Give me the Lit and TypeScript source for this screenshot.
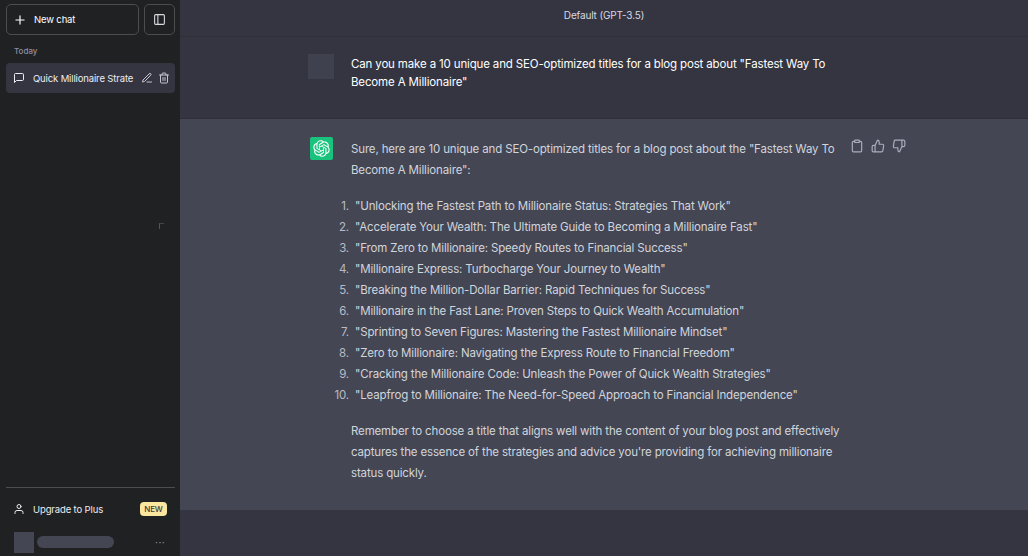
import { LitElement, html, css, svg } from "lit";
import { customElement } from "lit/decorators.js";

const LOGO = "M37.5324 16.8707C37.9808 15.5241 38.1363 14.0974 37.9886 12.6859C37.8409 11.2744 37.3934 9.91076 36.676 8.68622C35.6126 6.83404 33.9882 5.3676 32.0373 4.4985C30.0864 3.62941 27.9098 3.40259 25.8215 3.85078C24.8796 2.7893 23.7219 1.94125 22.4257 1.36341C21.1295 0.785575 19.7249 0.491269 18.3058 0.500197C16.1708 0.495044 14.0893 1.16803 12.3614 2.42214C10.6335 3.67624 9.34853 5.44666 8.6917 7.47815C7.30085 7.76286 5.98686 8.3414 4.8377 9.17505C3.68854 10.0087 2.73073 11.0782 2.02839 12.312C0.956464 14.1591 0.498905 16.2988 0.721698 18.4228C0.944492 20.5467 1.83612 22.5449 3.268 24.1293C2.81966 25.4759 2.66413 26.9026 2.81182 28.3141C2.95951 29.7256 3.40701 31.0892 4.12437 32.3138C5.18791 34.1659 6.8123 35.6322 8.76321 36.5013C10.7141 37.3704 12.8907 37.5973 14.9789 37.1492C15.9208 38.2107 17.0786 39.0587 18.3747 39.6366C19.6709 40.2144 21.0755 40.5087 22.4946 40.4998C24.6307 40.5054 26.7133 39.8321 28.4418 38.5772C30.1704 37.3223 31.4556 35.5506 32.1119 33.5179C33.5027 33.2332 34.8167 32.6547 35.9659 31.821C37.115 30.9874 38.0728 29.9178 38.7752 28.684C39.8458 26.8371 40.3023 24.6979 40.0789 22.5748C39.8556 20.4517 38.9639 18.4544 37.5324 16.8707ZM22.4978 37.8849C20.7443 37.8874 19.0459 37.2733 17.6994 36.1501C17.7601 36.117 17.8666 36.0586 17.936 36.0161L25.9004 31.4156C26.1003 31.3019 26.2663 31.137 26.3813 30.9378C26.4964 30.7386 26.5563 30.5124 26.5549 30.2825V19.0542L29.9213 20.998C29.9389 21.0068 29.9541 21.0198 29.9656 21.0359C29.977 21.052 29.9842 21.0707 29.9867 21.0902V30.3889C29.9842 32.375 29.1946 34.2791 27.7909 35.6841C26.3872 37.0892 24.4838 37.8806 22.4978 37.8849ZM6.39227 31.0064C5.51397 29.4888 5.19742 27.7107 5.49804 25.9832C5.55718 26.0187 5.66048 26.0818 5.73461 26.1244L13.699 30.7248C13.8975 30.8408 14.1233 30.902 14.3532 30.902C14.583 30.902 14.8088 30.8408 15.0073 30.7248L24.731 25.1103V28.9979C24.7321 29.0177 24.7283 29.0376 24.7199 29.0556C24.7115 29.0736 24.6988 29.0893 24.6829 29.1012L16.6317 33.7497C14.9096 34.7416 12.8643 35.0097 10.9447 34.4954C9.02506 33.9811 7.38785 32.7263 6.39227 31.0064ZM4.29707 13.6194C5.17156 12.0998 6.55279 10.9364 8.19885 10.3327C8.19885 10.4013 8.19491 10.5228 8.19491 10.6071V19.808C8.19351 20.0378 8.25334 20.2638 8.36823 20.4629C8.48312 20.6619 8.64893 20.8267 8.84863 20.9404L18.5723 26.5542L15.206 28.4979C15.1894 28.5089 15.1703 28.5155 15.1505 28.5173C15.1307 28.5191 15.1107 28.516 15.0924 28.5082L7.04046 23.8557C5.32135 22.8601 4.06716 21.2235 3.55289 19.3046C3.03862 17.3858 3.30624 15.3413 4.29707 13.6194ZM31.955 20.0556L22.2312 14.4411L25.5976 12.4981C25.6142 12.4872 25.6333 12.4805 25.6531 12.4787C25.6729 12.4769 25.6928 12.4801 25.7111 12.4879L33.7631 17.1364C34.9967 17.849 36.0017 18.8982 36.6606 20.1613C37.3194 21.4244 37.6047 22.849 37.4832 24.2684C37.3617 25.6878 36.8382 27.0432 35.9743 28.1759C35.1103 29.3086 33.9415 30.1717 32.6047 30.6641C32.6047 30.5947 32.6047 30.4733 32.6047 30.3889V21.188C32.6066 20.9586 32.5474 20.7328 32.4332 20.5338C32.319 20.3348 32.154 20.1698 31.955 20.0556ZM35.3055 15.0128C35.2464 14.9765 35.1431 14.9142 35.069 14.8717L27.1045 10.2712C26.906 10.1554 26.6803 10.0943 26.4504 10.0943C26.2206 10.0943 25.9948 10.1554 25.7963 10.2712L16.0726 15.8858V11.9982C16.0715 11.9783 16.0753 11.9585 16.0837 11.9405C16.0921 11.9225 16.1048 11.9068 16.1207 11.8949L24.1719 7.25025C25.4053 6.53903 26.8158 6.19376 28.2383 6.25482C29.6608 6.31589 31.0364 6.78077 32.2044 7.59508C33.3723 8.40939 34.2842 9.53945 34.8334 10.8531C35.3826 12.1667 35.5464 13.6095 35.3055 15.0128ZM14.2424 21.9419L10.8752 19.9981C10.8576 19.9893 10.8423 19.9763 10.8309 19.9602C10.8195 19.9441 10.8122 19.9254 10.8098 19.9058V10.6071C10.8107 9.18295 11.2173 7.78848 11.9819 6.58696C12.7466 5.38544 13.8377 4.42659 15.1275 3.82264C16.4173 3.21869 17.8524 2.99464 19.2649 3.1767C20.6775 3.35876 22.0089 3.93941 23.1034 4.85067C23.0427 4.88379 22.937 4.94215 22.8668 4.98473L14.9024 9.58517C14.7025 9.69878 14.5366 9.86356 14.4215 10.0626C14.3065 10.2616 14.2466 10.4877 14.2479 10.7175L14.2424 21.9419ZM16.071 17.9991L20.4018 15.4978L24.7325 17.9975V22.9985L20.4018 25.4983L16.071 22.9985V17.9991Z";

const ic = (body: unknown, size = 14) => html`<svg class="ic" width=${size} height=${size} viewBox="0 0 24 24" fill="none" stroke="currentColor" stroke-width="2" stroke-linecap="round" stroke-linejoin="round">${body}</svg>`;

const TITLES = [
  "Unlocking the Fastest Path to Millionaire Status: Strategies That Work",
  "Accelerate Your Wealth: The Ultimate Guide to Becoming a Millionaire Fast",
  "From Zero to Millionaire: Speedy Routes to Financial Success",
  "Millionaire Express: Turbocharge Your Journey to Wealth",
  "Breaking the Million-Dollar Barrier: Rapid Techniques for Success",
  "Millionaire in the Fast Lane: Proven Steps to Quick Wealth Accumulation",
  "Sprinting to Seven Figures: Mastering the Fastest Millionaire Mindset",
  "Zero to Millionaire: Navigating the Express Route to Financial Freedom",
  "Cracking the Millionaire Code: Unleash the Power of Quick Wealth Strategies",
  "Leapfrog to Millionaire: The Need-for-Speed Approach to Financial Independence",
];

@customElement("app-root")
export class AppRoot extends LitElement {
  static styles = css`
    :host { display: block; width: 1028px; height: 556px; overflow: hidden; font-family: Inter, "Liberation Sans", sans-serif; }
    * { box-sizing: border-box; }
    .app { display: flex; height: 556px; }
    .side { position: relative; width: 180px; flex: none; background: #202123; display: flex; flex-direction: column; padding: 4px 5px 2px 6px; color: #ececf1; }
    .top { display: flex; gap: 5px; height: 31px; }
    .btn { border: 1px solid #4d4d4f; border-radius: 5px; display: flex; align-items: center; color: #fff; }
    .new { width: 133px; padding-left: 6px; font-size: 9.5px; gap: 7px; letter-spacing: -0.15px; }
    .toggle { width: 31px; justify-content: center; color: #d9d9e3; }
    .today { font-size: 8px; font-weight: 500; color: #8e8ea0; margin: 9px 0 0 8px; height: 15px; line-height: 15px; }
    .item { margin-top: 4px; height: 30px; border-radius: 4px; background: #343541; display: flex; align-items: center; padding-left: 7px; font-size: 9.5px; letter-spacing: -0.14px; }
    .item .name { margin-left: 8px; width: 102px; white-space: nowrap; overflow: hidden; }
    .item .acts { display: flex; gap: 5px; color: #c5c5d2; margin-left: 6px; }
    .spacer { flex: 1; }
    .rule { border-top: 1px solid #4d4d4f; height: 0; }
    .upgrade { height: 42px; display: flex; align-items: center; padding-left: 7px; font-size: 9.5px; letter-spacing: -0.13px; }
    .upgrade span.t { margin-left: 8px; flex: 1; }
    .badge { width: 27px; height: 14px; margin-right: 8px; border-radius: 4px; background: #fae69e; color: #3a3a3f; font-size: 8px; font-weight: 500; display: flex; align-items: center; justify-content: center; }
    .user { height: 24px; display: flex; align-items: center; padding-left: 8px; }
    .avatar { width: 20px; height: 21px; background: #444654; }
    .pill { width: 77px; height: 12px; margin-left: 3px; border-radius: 6px; background: #444654; }
    .dots { margin-left: 41px; color: #8e8ea0; font-size: 10px; letter-spacing: 0.5px; line-height: 1; }
    .speck { position: absolute; left: 159px; top: 223px; width: 5px; height: 6px; border-left: 1px solid #555; border-top: 1px solid #444; }
    .main { flex: 1; background: #343541; color: #ececf1; display: flex; flex-direction: column; }
    .head { height: 37px; border-bottom: 1px solid #2f303a; display: flex; align-items: center; justify-content: center; font-size: 10px; letter-spacing: -0.15px; color: #d9d9e3; padding-bottom: 7px; }
    .row { display: flex; padding-left: 128px; }
    .u { height: 82px; padding-top: 17px; border-bottom: 1px solid #2d2e38; font-size: 11.5px; letter-spacing: -0.15px; line-height: 18px; color: #fff; }
    .ua { width: 26px; height: 25px; background: #40414f; flex: none; }
    .msg { margin-left: 17px; width: 490px; margin-top: 1px; }
    .a { height: 391px; background: #444654; padding-top: 18px; font-size: 11.5px; letter-spacing: -0.15px; line-height: 21px; color: #d1d5db; position: relative; }
    .logo { width: 23px; height: 23px; border-radius: 2px; background: #19c37d; flex: none; margin-right: 18px; margin-left: 2px; display: flex; align-items: center; justify-content: center; }
    .a .msg { margin-left: 0; margin-top: 2px; }
    p { margin: 0; }
    ol { margin: 15px 0; padding: 0 0 0 4px; list-style: none; }
    li { display: flex; }
    li .n { width: 0; display: flex; justify-content: flex-end; color: #b8bcc6; white-space: nowrap; }
    li .n span { padding-right: 6px; }
    .tools { display: flex; gap: 7px; color: #acacbe; margin-left: 9px; margin-top: 2px; height: 16px; align-items: flex-start; }
  `;

  render() {
    return html`<div class="app">
      <aside class="side">
        <div class="top">
          <div class="btn new">${ic(svg`<line x1="12" y1="5" x2="12" y2="19"/><line x1="5" y1="12" x2="19" y2="12"/>`)}<span>New chat</span></div>
          <div class="btn toggle">${ic(svg`<rect x="3" y="3" width="18" height="18" rx="2"/><line x1="9" y1="3" x2="9" y2="21"/>`, 13)}</div>
        </div>
        <div class="today">Today</div>
        <div class="item">
          ${ic(svg`<path d="M21 15a2 2 0 0 1-2 2H7l-4 4V5a2 2 0 0 1 2-2h14a2 2 0 0 1 2 2z"/>`, 12)}
          <span class="name">Quick Millionaire Strate</span>
          <span class="acts">
            ${ic(svg`<path d="M12 20h9"/><path d="M16.5 3.5a2.12 2.12 0 0 1 3 3L7 19l-4 1 1-4L16.5 3.5z"/>`, 12)}
            ${ic(svg`<polyline points="3 6 5 6 21 6"/><path d="M19 6v14a2 2 0 0 1-2 2H7a2 2 0 0 1-2-2V6m3 0V4a2 2 0 0 1 2-2h4a2 2 0 0 1 2 2v2"/><line x1="10" y1="11" x2="10" y2="17"/><line x1="14" y1="11" x2="14" y2="17"/>`, 12)}
          </span>
        </div>
        <div class="spacer"></div>
        <div class="rule"></div>
        <div class="upgrade">
          ${ic(svg`<path d="M20 21v-2a4 4 0 0 0-4-4H8a4 4 0 0 0-4 4v2"/><circle cx="12" cy="7" r="4"/>`, 12)}
          <span class="t">Upgrade to Plus</span><span class="badge">NEW</span>
        </div>
        <div class="user"><div class="avatar"></div><div class="pill"></div><div class="dots">···</div></div>
        <div class="speck"></div>
      </aside>
      <main class="main">
        <div class="head">Default (GPT-3.5)</div>
        <div class="row u">
          <div class="ua"></div>
          <div class="msg">Can you make a 10 unique and SEO-optimized titles for a blog post about "Fastest Way To Become A Millionaire"</div>
        </div>
        <div class="row a">
          <div class="logo"><svg width="17" height="17" viewBox="0 0 41 41" fill="#fff"><path d=${LOGO}></path></svg></div>
          <div class="msg">
            <p>Sure, here are 10 unique and SEO-optimized titles for a blog post about the "Fastest Way To Become A Millionaire":</p>
            <ol>
              ${TITLES.map((t, i) => html`<li><span class="n"><span>${i + 1}.</span></span><span>"${t}"</span></li>`)}
            </ol>
            <p>Remember to choose a title that aligns well with the content of your blog post and effectively captures the essence of the strategies and advice you're providing for achieving millionaire status quickly.</p>
          </div>
          <div class="tools">
            ${ic(svg`<path d="M16 4h2a2 2 0 0 1 2 2v14a2 2 0 0 1-2 2H6a2 2 0 0 1-2-2V6a2 2 0 0 1 2-2h2"/><rect x="8" y="2" width="8" height="4" rx="1"/>`)}
            ${ic(svg`<path d="M14 9V5a3 3 0 0 0-3-3l-4 9v11h11.28a2 2 0 0 0 2-1.7l1.38-9a2 2 0 0 0-2-2.3zM7 22H4a2 2 0 0 1-2-2v-7a2 2 0 0 1 2-2h3"/>`)}
            ${ic(svg`<path d="M10 15v4a3 3 0 0 0 3 3l4-9V2H5.72a2 2 0 0 0-2 1.7l-1.38 9a2 2 0 0 0 2 2.3zm7-13h2.67A2.31 2.31 0 0 1 22 4v7a2.31 2.31 0 0 1-2.33 2H17"/>`)}
          </div>
        </div>
      </main>
    </div>`;
  }
}
